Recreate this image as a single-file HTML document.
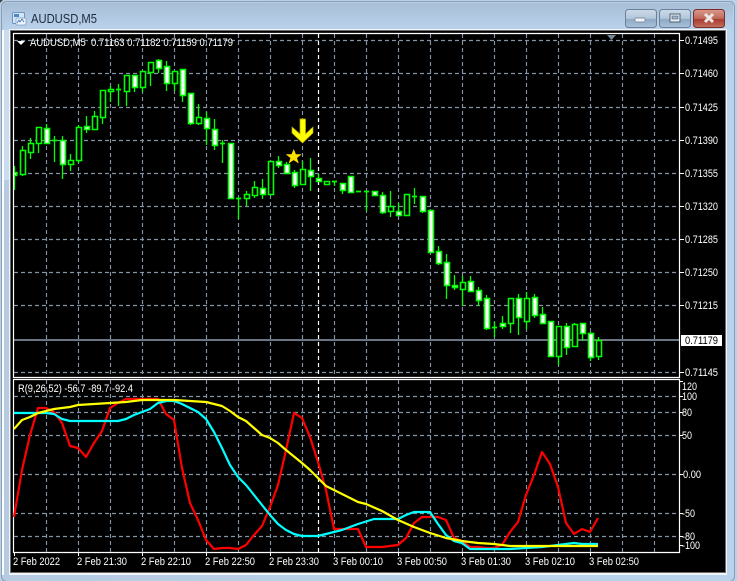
<!DOCTYPE html>
<html><head><meta charset="utf-8"><title>AUDUSD,M5</title>
<style>
html,body{margin:0;padding:0;background:#b9d1ea;width:737px;height:581px;overflow:hidden}
svg{display:block;position:absolute;left:0;top:0}
text{font-family:"Liberation Sans",sans-serif;font-size:11px;fill:#fff}
.g{stroke:#8493a5;stroke-width:1.150;stroke-dasharray:4 3;fill:none}
.s{stroke:#fff;stroke-width:1.200;stroke-dasharray:4 3;fill:none}
.ind{fill:none;stroke-width:2.200;stroke-linejoin:round}
</style></head><body>
<svg width="737" height="581" viewBox="0 0 737 581" xmlns="http://www.w3.org/2000/svg">
<defs>
<linearGradient id="tb" x1="0" y1="0" x2="1" y2="0"><stop offset="0" stop-color="#b4cbe2"/><stop offset="1" stop-color="#b9d2ec"/></linearGradient>
<linearGradient id="tbv" x1="0" y1="0" x2="0" y2="1"><stop offset="0" stop-color="#a7bed6"/><stop offset="1" stop-color="#bad3ec"/></linearGradient>
<linearGradient id="btn" x1="0" y1="0" x2="0" y2="1"><stop offset="0" stop-color="#cddbe9"/><stop offset=".5" stop-color="#b2c6da"/><stop offset=".55" stop-color="#8fa9c5"/><stop offset="1" stop-color="#a9c3dc"/></linearGradient>
<linearGradient id="cl" x1="0" y1="0" x2="0" y2="1"><stop offset="0" stop-color="#d99a8e"/><stop offset=".5" stop-color="#c06a5a"/><stop offset=".55" stop-color="#a83c30"/><stop offset="1" stop-color="#c4705e"/></linearGradient>
</defs>
<!-- window chrome -->
<rect x="0" y="0" width="737" height="581" fill="#b9d1ea"/>
<rect x="1.500" y="1.500" width="733" height="580" rx="5" fill="url(#tb)" stroke="#8a9db2"/>
<rect x="3" y="3" width="730" height="27" fill="url(#tbv)"/>
<path d="M0 0h3L0 3z" fill="#444"/>
<rect x="2" y="30" width="2" height="545" fill="#fff"/>
<rect x="4" y="30" width="5" height="150" fill="#c9dcf0"/>
<rect x="9" y="29" width="718" height="546" fill="#f1f5fa"/>
<rect x="10" y="30" width="716" height="543" fill="#6d6d6d"/>
<rect x="11" y="31" width="714" height="541" fill="#000"/>
<!-- title -->
<rect x="12.500" y="12.500" width="12" height="11" rx="1" fill="#d6e6f6" stroke="#6f93bd"/>
<rect x="14" y="14" width="5" height="3" fill="#4c86c6"/>
<rect x="16" y="18" width="10" height="7" rx="1" fill="#eef5fc" stroke="#7f9fc4" stroke-width=".8"/>
<path d="M17 23l2-3 1 2 2-3 2 3" stroke="#3d6fb0" stroke-width=".8" fill="none"/>
<text x="31" y="23" style="font-size:12.500px;fill:#1d2a3a" textLength="66" lengthAdjust="spacingAndGlyphs">AUDUSD,M5</text>
<!-- buttons -->
<rect x="625.500" y="9.500" width="31" height="18" rx="3" fill="url(#btn)" stroke="#6b7f96"/>
<rect x="635" y="18" width="10" height="4" rx="1" fill="#f1f4f8" stroke="#6a7a8c" stroke-width=".7"/>
<rect x="659.500" y="9.500" width="31" height="18" rx="3" fill="url(#btn)" stroke="#6b7f96"/>
<rect x="670" y="14" width="10" height="8" fill="#e9eff5" stroke="#4e5f72" stroke-width="1"/>
<rect x="672" y="16" width="6" height="3" fill="#9fb4c9" stroke="#4e5f72" stroke-width=".6"/>
<rect x="693.500" y="9.500" width="31" height="18" rx="3" fill="url(#cl)" stroke="#7a2d2a"/>
<path d="M705 14l8 8M713 14l-8 8" stroke="#ece6e4" stroke-width="3"/>
<!-- grid main -->
<path class="g" d="M14 40.500H679M14 73.500H679M14 107.500H679M14 140.500H679M14 173.500H679M14 206.500H679M14 239.500H679M14 272.500H679M14 305.500H679M14 372.500H679"/>
<path class="g" d="M46.500 34V377M78.500 34V377M110.500 34V377M142.500 34V377M174.500 34V377M206.500 34V377M238.500 34V377M270.500 34V377M302.500 34V377M334.500 34V377M366.500 34V377M398.500 34V377M430.500 34V377M462.500 34V377M494.500 34V377M526.500 34V377M558.500 34V377M590.500 34V377M622.500 34V377M654.500 34V377"/>
<path class="s" d="M318.500 34V377"/>
<!-- price line -->
<path d="M14 340H679" stroke="#8f9dae" stroke-width="1.600" fill="none"/>
<!-- wicks -->
<g stroke="#00ff00" stroke-width="1.300" fill="none">
<path d="M14.500 166V190M22.500 146V176M30.500 138V159M38.500 127V153M46.500 124V143M54.500 136V162M62.500 136V179M70.500 154V171M78.500 125V163M86.500 116V133M94.500 111V129M102.500 90V124M110.500 86V102M118.500 84V106M126.500 75V106M134.500 75V92M142.500 71V92M150.500 62V86M158.500 59V73M166.500 61V91M174.500 71V91M182.500 69V102M190.500 93V125M198.500 104V125M206.500 112V145M214.500 119V150M222.500 140V163M230.500 143V198M238.500 198V219M246.500 191V206M254.500 181V198M262.500 179V199M270.500 161V194M278.500 156V168M286.500 162V173M294.500 170V188M302.500 161V184M310.500 158V191M318.500 174V181M326.500 181V184M334.500 181V186M342.500 183V194M350.500 176V192M366.500 191V211M374.500 191V195M382.500 192V214M390.500 191V217M398.500 203V215M406.500 194V215M414.500 188V204M422.500 196V213M430.500 210V253M438.500 246V265M446.500 254V299M454.500 275V290M462.500 276V306M470.500 276V292M478.500 287V306M486.500 295V330M494.500 322V337M502.500 316V329M510.500 298V333M518.500 294V335M526.500 292V329M534.500 294V318M542.500 307V324M550.500 321V356M558.500 326V365M566.500 323V355M574.500 323V347M582.500 323V341M590.500 332V361M598.500 337V360"/>
<!-- doji -->
<path stroke-width="1.800" d="M52 140.500H57M116 89.500H121M220 143.500H225M236 198.500H241M332 181.500H337M356 191.500H361M364 191.500H369M412 196.500H417M492 327.500H497"/>
</g>
<!-- white bodies -->
<g stroke="#00ff00" stroke-width="1.600" fill="#fff">
<path d="M13.700 172.500h3v3h-3z"/>
<path d="M44.500 128.500h5v15h-5zM60.500 140.500h5v24h-5zM84.500 126.500h5v3h-5zM132.500 75.500h5v12h-5zM156.500 60.500h5v8h-5zM164.500 66.500h5v17h-5zM180.500 69.500h5v26h-5zM188.500 93.500h5v30h-5zM204.500 118.500h5v10h-5zM212.500 129.500h5v16h-5zM228.500 143.500h5v55h-5z"/>
<path d="M260.500 188.500h5v6h-5zM276.500 161.500h5v4h-5zM284.500 164.500h5v9h-5zM292.500 172.500h5v13h-5zM308.500 170.500h5v6h-5zM316.500 178.500h5v3h-5zM340.500 183.500h5v7h-5zM348.500 176.500h5v16h-5zM372.500 191.500h5v4h-5zM380.500 195.500h5v17h-5zM396.500 211.500h5v4h-5zM420.500 196.500h5v15h-5zM428.500 210.500h5v42h-5z"/>
<path d="M436.500 251.500h5v12h-5zM444.500 262.500h5v23h-5zM452.500 285.500h5v2h-5zM468.500 281.500h5v10h-5zM476.500 290.500h5v10h-5zM484.500 298.500h5v30h-5zM500.500 323.500h5v3h-5zM516.500 298.500h5v19h-5zM532.500 297.500h5v18h-5zM540.500 314.500h5v9h-5zM548.500 321.500h5v35h-5zM564.500 326.500h5v21h-5zM580.500 323.500h5v10h-5zM588.500 333.500h5v24h-5z"/>
</g>
<!-- hollow bodies -->
<g stroke="#00ff00" stroke-width="1.600" fill="#000">
<path d="M20.500 150.500h5v24h-5zM28.500 143.500h5v9h-5zM36.500 127.500h5v16h-5zM68.500 160.500h5v4h-5zM76.500 127.500h5v33h-5zM92.500 116.500h5v13h-5zM100.500 90.500h5v27h-5zM108.500 89.500h5v2h-5zM124.500 75.500h5v16h-5zM140.500 71.500h5v16h-5zM148.500 62.500h5v10h-5zM172.500 71.500h5v12h-5zM196.500 117.500h5v6h-5z"/>
<path d="M244.500 194.500h5v4h-5zM252.500 187.500h5v8h-5zM268.500 161.500h5v33h-5zM300.500 169.500h5v15h-5zM324.500 181.500h5v3h-5zM388.500 206.500h5v5h-5zM404.500 194.500h5v21h-5zM460.500 282.500h5v7h-5zM508.500 298.500h5v25h-5zM524.500 298.500h5v23h-5zM556.500 326.500h5v30h-5zM572.500 324.500h5v22h-5zM596.500 340.500h5v16h-5z"/>
</g>
<!-- arrow & star -->
<path d="M300 119h5.500v15l7.500-7v6l-10.500 10L292 133v-6l8 7z" fill="#ffff00" stroke="#b8a800" stroke-width=".7"/>
<path d="M293.700 149l2.200 5.300h5.800l-4.700 3.700 1.800 5.500-5.100-3.400-5.100 3.400 1.800-5.500-4.700-3.700h5.800z" fill="#ffdf00"/>
<path d="M607 35h9l-4.500 5z" fill="#778899"/>
<!-- frames -->
<path d="M13.500 33.500H679.500V377.500H13.500zM13.500 379.500H679.500V552.500H13.500z" fill="none" stroke="#fff" stroke-width="1.200"/>
<!-- ticks right -->
<path d="M680 40.500h4M680 73.500h4M680 107.500h4M680 140.500h4M680 173.500h4M680 206.500h4M680 239.500h4M680 272.500h4M680 305.500h4M680 372.500h4M680 381.500h3M680 396.500h3M680 412.500h3M680 435.500h3M680 474.500h3M680 513.500h3M680 536.500h3M680 545.500h3" stroke="#fff" fill="none"/>
<path d="M14.500 553v3M78.500 553v3M142.500 553v3M206.500 553v3M270.500 553v3M334.500 553v3M398.500 553v3M462.500 553v3M526.500 553v3M590.500 553v3" stroke="#fff" fill="none"/>
<!-- header -->
<path d="M17 41h8l-4 4z" fill="#fff"/>
<text x="30" y="46" textLength="203" lengthAdjust="spacingAndGlyphs">AUDUSD,M5&#160; 0.71163 0.71182 0.71159 0.71179</text>
<!-- price labels -->
<g>
<text x="685" y="44" textLength="33" lengthAdjust="spacingAndGlyphs">0.71495</text>
<text x="685" y="77" textLength="33" lengthAdjust="spacingAndGlyphs">0.71460</text>
<text x="685" y="111" textLength="33" lengthAdjust="spacingAndGlyphs">0.71425</text>
<text x="685" y="144" textLength="33" lengthAdjust="spacingAndGlyphs">0.71390</text>
<text x="685" y="177" textLength="33" lengthAdjust="spacingAndGlyphs">0.71355</text>
<text x="685" y="210" textLength="33" lengthAdjust="spacingAndGlyphs">0.71320</text>
<text x="685" y="243" textLength="33" lengthAdjust="spacingAndGlyphs">0.71285</text>
<text x="685" y="276" textLength="33" lengthAdjust="spacingAndGlyphs">0.71250</text>
<text x="685" y="309" textLength="33" lengthAdjust="spacingAndGlyphs">0.71215</text>
<text x="685" y="376" textLength="33" lengthAdjust="spacingAndGlyphs">0.71145</text>
</g>
<rect x="681" y="335" width="41" height="11" fill="#fff"/>
<text x="685" y="344" textLength="33" lengthAdjust="spacingAndGlyphs" style="fill:#000">0.71179</text>
<!-- sub window grid -->
<path class="g" d="M14 396.500H679M14 412.500H679M14 435.500H679M14 474.500H679M14 513.500H679M14 536.500H679"/>
<path class="g" d="M46.500 380V552M78.500 380V552M110.500 380V552M142.500 380V552M174.500 380V552M206.500 380V552M238.500 380V552M270.500 380V552M302.500 380V552M334.500 380V552M366.500 380V552M398.500 380V552M430.500 380V552M462.500 380V552M494.500 380V552M526.500 380V552M558.500 380V552M590.500 380V552M622.500 380V552M654.500 380V552"/>
<path class="s" d="M318.500 380V552"/>
<!-- indicators -->
<polyline class="ind" stroke="#ff0000" points="14,517 22,470 30,435 38,408 46,408 54,412 62,423 70,446 78,448 86,457 94,443 102,431 110,408 118,403 126,399 134,399 142,399 150,399 158,399 166,414 174,420 182,468 190,503 198,520 206,540 214,549 222,548 230,548 238,549 246,545 254,535 262,526 270,507 278,485 286,450 294,413 302,418 310,437 318,462 326,490 334,529 342,529 350,529 358,529 366,547 374,547 382,547 390,546 398,545 406,538 414,523 422,517 430,517 438,517 446,520 454,538 462,541 470,547 478,547 486,548 494,548 502,545 510,532 518,522 526,495 534,475 542,452 550,464 558,487 566,523 574,534 582,529 590,532 598,518"/>
<polyline class="ind" stroke="#00ffff" points="14,413 46,413 54,414 62,419 70,421 118,421 126,419 134,415 142,412 150,409 158,403 166,401 174,401 182,404 190,408 198,412 206,419 214,432 222,448 230,465 238,477 246,485 254,495 262,505 270,515 278,524 286,530 294,534 302,536 318,536 334,532 342,530 358,524 374,519 398,519 406,515 414,512 430,512 438,524 446,535 454,541 462,543 470,549 494,549 510,549 526,548 542,547 558,545 574,543 582,544 598,544"/>
<polyline class="ind" stroke="#ffff00" points="14,429 22,420 30,417 38,413 54,409 70,407 78,405 94,404 110,403 126,402 142,400 174,400 190,401 206,402 222,406 230,411 238,417 246,421 262,435 270,438 278,443 286,450 302,463 310,470 318,478 326,486 334,490 358,502 366,504 382,511 398,520 414,527 430,533 446,538 462,541 470,542 478,543 494,544 510,546 598,546"/>
<text x="18" y="392" textLength="115" lengthAdjust="spacingAndGlyphs">R(9,26,52) -56.7 -89.7 -92.4</text>
<!-- sub labels -->
<text x="682" y="390" textLength="15" lengthAdjust="spacingAndGlyphs">120</text>
<text x="682" y="400" textLength="15" lengthAdjust="spacingAndGlyphs">100</text>
<text x="682" y="416" textLength="10" lengthAdjust="spacingAndGlyphs">80</text>
<text x="682" y="439" textLength="10" lengthAdjust="spacingAndGlyphs">50</text>
<text x="683" y="478" textLength="18" lengthAdjust="spacingAndGlyphs">0.00</text>
<text x="682" y="517" textLength="13" lengthAdjust="spacingAndGlyphs">-50</text>
<text x="682" y="540" textLength="13" lengthAdjust="spacingAndGlyphs">-80</text>
<text x="682" y="549" textLength="18" lengthAdjust="spacingAndGlyphs">-100</text>
<!-- time labels -->
<text x="13" y="565" textLength="47" lengthAdjust="spacingAndGlyphs">2 Feb 2022</text>
<text x="77" y="565" textLength="50" lengthAdjust="spacingAndGlyphs">2 Feb 21:30</text>
<text x="141" y="565" textLength="50" lengthAdjust="spacingAndGlyphs">2 Feb 22:10</text>
<text x="205" y="565" textLength="50" lengthAdjust="spacingAndGlyphs">2 Feb 22:50</text>
<text x="269" y="565" textLength="50" lengthAdjust="spacingAndGlyphs">2 Feb 23:30</text>
<text x="333" y="565" textLength="50" lengthAdjust="spacingAndGlyphs">3 Feb 00:10</text>
<text x="397" y="565" textLength="50" lengthAdjust="spacingAndGlyphs">3 Feb 00:50</text>
<text x="461" y="565" textLength="50" lengthAdjust="spacingAndGlyphs">3 Feb 01:30</text>
<text x="525" y="565" textLength="50" lengthAdjust="spacingAndGlyphs">3 Feb 02:10</text>
<text x="589" y="565" textLength="50" lengthAdjust="spacingAndGlyphs">3 Feb 02:50</text>
</svg>
</body></html>
